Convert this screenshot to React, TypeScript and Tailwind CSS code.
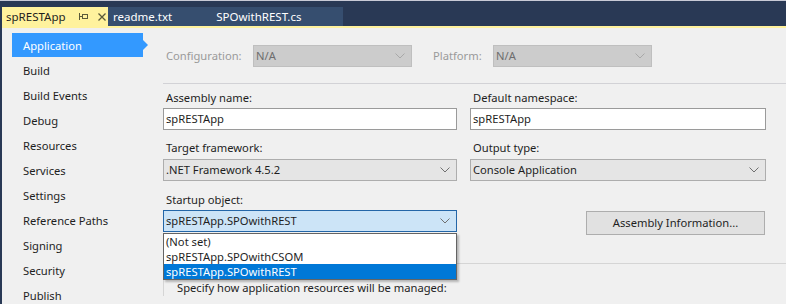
import React from 'react';

const navItems = [
  'Application',
  'Build',
  'Build Events',
  'Debug',
  'Resources',
  'Services',
  'Settings',
  'Reference Paths',
  'Signing',
  'Security',
  'Publish',
];

function Chevron({ color }: { color: string }) {
  return (
    <svg width="10" height="6" viewBox="0 0 10 6" className="shrink-0">
      <polyline points="0.5,0.5 5,5 9.5,0.5" fill="none" stroke={color} strokeWidth="1" />
    </svg>
  );
}

function Select({
  value,
  variant = 'normal',
  className = '',
}: {
  value: string;
  variant?: 'normal' | 'disabled' | 'active';
  className?: string;
}) {
  const styles = {
    normal: 'bg-[#e5e5e5] border-[#adadad] text-[#1e1e1e]',
    disabled: 'bg-[#cccccc] border-[#bfbfbf] text-[#6d6d6d]',
    active: 'bg-[#cce4f7] border-[#2366a8] text-[#1e1e1e]',
  }[variant];
  return (
    <div className={`flex h-[22px] items-center justify-between border pl-[2px] pr-[6px] ${styles} ${className}`}>
      <span>{value}</span>
      <Chevron color={variant === 'disabled' ? '#a8a8a8' : '#707070'} />
    </div>
  );
}

function TextBox({ value }: { value: string }) {
  return (
    <div className="flex h-[22px] items-center border border-[#9a9a9a] bg-white pl-[2px] text-[#1e1e1e]">
      {value}
    </div>
  );
}

export default function App() {
  return (
    <div
      className="w-[786px] h-[304px] overflow-hidden border-t border-[#c8cad6] bg-[#293955] pl-[2px] text-[11.2px] leading-[16px]"
      style={{ fontFamily: '"Noto Sans", "Open Sans", sans-serif' }}
    >
      {/* document tabs */}
      <div className="flex h-[25px] items-end">
        <div className="flex h-[19px] w-[106px] items-center bg-[#fff29d] pl-[4px] text-[#1e1e1e]">
          <span className="text-[11.5px]">spRESTApp</span>
          <svg width="9" height="7" viewBox="0 0 9 7" className="ml-[13px]">
            <line x1="0.5" y1="0" x2="0.5" y2="7" stroke="#5a5a3a" />
            <line x1="0.5" y1="3.5" x2="3" y2="3.5" stroke="#5a5a3a" />
            <rect x="3.5" y="1.5" width="5" height="4" fill="none" stroke="#5a5a3a" />
          </svg>
          <svg width="8" height="8" viewBox="0 0 8 8" className="ml-[10px]">
            <path d="M0.5 0.5 L7.5 7.5 M7.5 0.5 L0.5 7.5" stroke="#5a5a3a" strokeWidth="1.3" />
          </svg>
        </div>
        <div className="flex h-[19px] w-[235px] items-center bg-[#364e6f] text-[11.5px] text-white">
          <span className="ml-[5px]">readme.txt</span>
          <span className="ml-[44px]">SPOwithREST.cs</span>
        </div>
      </div>
      <div className="h-[2px] bg-[#fff29d]" />

      {/* body */}
      <div className="flex h-[276px] bg-[#f0f0f0]">
        {/* left navigation */}
        <div className="w-[161px] shrink-0 pt-[5px]">
          {navItems.map((item, i) => (
            <div key={item} className="h-[25px] pl-[10px]">
              {i === 0 ? (
                <div className="relative flex h-[24px] w-[131px] items-center bg-[#3399ff] pl-[11px] pt-[2px] text-white">
                  {item}
                  <div className="absolute right-[-5px] top-[7px] h-0 w-0 border-y-[5px] border-l-[5px] border-y-transparent border-l-[#3399ff]" />
                </div>
              ) : (
                <div className="flex h-[24px] items-center pl-[11px] pt-[2px] text-[#1e1e1e]">{item}</div>
              )}
            </div>
          ))}
        </div>

        {/* property page */}
        <div className="relative flex-1 pt-[17px]">
          <div className="flex items-center">
            <span className="w-[90px] pl-[3px] text-[#9a9a9a]">Configuration:</span>
            <Select value="N/A" variant="disabled" className="w-[159px]" />
            <span className="ml-[21px] w-[60px] text-[#9a9a9a]">Platform:</span>
            <Select value="N/A" variant="disabled" className="w-[159px]" />
          </div>

          <div className="mt-[16px] h-px bg-[#d2d2d6]" />

          <div className="grid grid-cols-[294px_296px] gap-x-[13px]">
            <div>
              <div className="mt-[6px] pl-[3px] text-[#1e1e1e]">Assembly name:</div>
              <div className="mt-[2px]">
                <TextBox value="spRESTApp" />
              </div>
              <div className="mt-[10px] pl-[3px] text-[#1e1e1e]">Target framework:</div>
              <div className="mt-[3px]">
                <Select value=".NET Framework 4.5.2" />
              </div>
              <div className="mt-[11px] pl-[3px] text-[#1e1e1e]">Startup object:</div>
              <div className="mt-[2px]">
                <Select value="spRESTApp.SPOwithREST" variant="active" />
              </div>
            </div>
            <div>
              <div className="mt-[6px] pl-[3px] text-[#1e1e1e]">Default namespace:</div>
              <div className="mt-[2px]">
                <TextBox value="spRESTApp" />
              </div>
              <div className="mt-[10px] pl-[3px] text-[#1e1e1e]">Output type:</div>
              <div className="mt-[3px]">
                <Select value="Console Application" />
              </div>
              <div className="mt-[30px] pl-[116px]">
                <div className="flex h-[24px] w-[179px] items-center justify-center border border-[#adadad] bg-[#e1e1e1] text-[#1e1e1e]">
                  Assembly Information...
                </div>
              </div>
            </div>
          </div>

          <div className="mt-[28px] border-l border-t border-[#d5d5d5] pl-[13px] pt-[16px] text-[#1e1e1e]">
            Specify how application resources will be managed:
          </div>

          {/* open combo list */}
          <div className="absolute left-0 top-[205px] w-[294px] border border-[#646464] bg-white text-[#1e1e1e] shadow-[2px_2px_2px_rgba(0,0,0,0.25)]">
            <div className="h-[15px] pl-[2px] leading-[15px]">(Not set)</div>
            <div className="h-[15px] pl-[2px] leading-[15px]">spRESTApp.SPOwithCSOM</div>
            <div className="h-[15px] bg-[#0078d7] pl-[2px] leading-[15px] text-white">spRESTApp.SPOwithREST</div>
          </div>
        </div>
      </div>
    </div>
  );
}
